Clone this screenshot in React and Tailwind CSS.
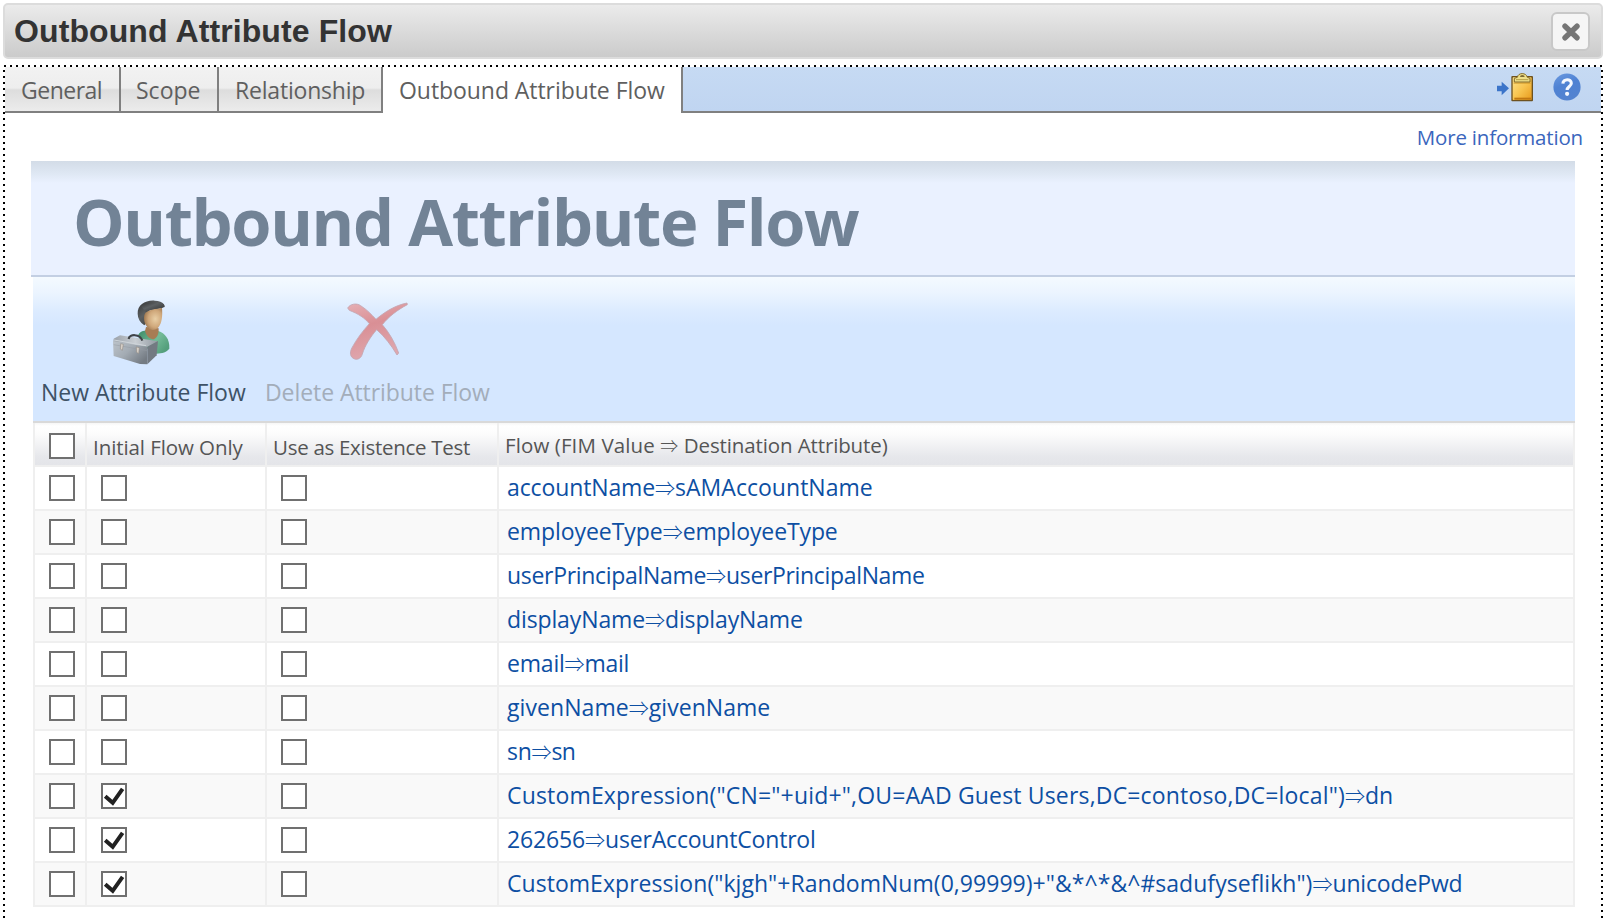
import React from 'react';

const ROWS = [
  { left: 'accountName', right: 'sAMAccountName', l: 'tracking-[-0.12px]', r: 'tracking-[0.03px]' },
  { left: 'employeeType', right: 'employeeType', l: 'tracking-[-0.07px]', r: 'tracking-[-0.12px]' },
  { left: 'userPrincipalName', right: 'userPrincipalName', l: 'tracking-[-0.31px]', r: 'tracking-[-0.34px]' },
  { left: 'displayName', right: 'displayName', l: 'tracking-[-0.12px]', r: 'tracking-[-0.14px]' },
  { left: 'email', right: 'mail', l: 'tracking-[-0.2px]', r: 'tracking-[-0.3px]' },
  { left: 'givenName', right: 'givenName', l: 'tracking-[0.08px]', r: 'tracking-[0.03px]' },
  { left: 'sn', right: 'sn', l: 'tracking-[-0.3px]', r: 'tracking-[-0.6px]' },
  {
    left: 'CustomExpression("CN="+uid+",OU=AAD Guest Users,DC=contoso,DC=local")',
    right: 'dn',
    l: 'tracking-[0.17px]',
    r: 'tracking-[0.1px]',
    initial: true,
  },
  { left: '262656', right: 'userAccountControl', l: 'tracking-[-0.15px]', r: 'tracking-[-0.18px]', initial: true },
  {
    left: 'CustomExpression("kjgh"+RandomNum(0,99999)+"&*^*&^#sadufyseflikh")',
    right: 'unicodePwd',
    l: 'tracking-[0.04px]',
    r: 'tracking-[-0.15px]',
    initial: true,
  },
];

function Checkbox({ checked = false }) {
  return (
    <span className="block size-[26px] shrink-0 border-2 border-[#707070] bg-white">
      {checked && (
        <svg viewBox="0 0 22 22" className="block size-[22px]" fill="none">
          <path d="M2.2 11.3 L9.7 17.8 L19.6 3.8" stroke="#212121" strokeWidth="4" />
        </svg>
      )}
    </span>
  );
}

function CloseIcon() {
  return (
    <svg viewBox="0 0 20 20" className="size-5" fill="none">
      <path d="M4 4.2 L16 15.8 M16 4.2 L4 15.8" stroke="#757575" strokeWidth="5.4" strokeLinecap="round" />
    </svg>
  );
}

function ClipboardIcon() {
  return (
    <svg viewBox="330 215 120 93" className="h-[31px] w-10" fill="none">
      <defs>
        <linearGradient id="clipPaper" x1="0" y1="0" x2="1" y2="1">
          <stop offset="0" stopColor="#fce28c" />
          <stop offset="0.5" stopColor="#f8c550" />
          <stop offset="1" stopColor="#e89a1c" />
        </linearGradient>
      </defs>
      <path d="M336 256 H350 V244 L372 264 L350 285 V273 H336 Z" fill="#3b74c9" />
      <rect x="379" y="227" width="65" height="76" rx="3" fill="#6d5220" />
      <rect x="383" y="231" width="57" height="68" rx="2" fill="url(#clipPaper)" />
      <path d="M386 246 H437 V251 H386 Z" fill="#d19a2b" opacity="0.6" />
      <path d="M388 292 H438 V298 H388 Z" fill="#c17812" />
      <path d="M388 245 V234 L397 231 C399 216 424 216 427 231 L435 234 V245 Z" fill="#efe08a" stroke="#806a2c" strokeWidth="3" />
      <path d="M405 230 a7 6 0 0 1 14 0 Z" fill="#7c6a35" />
      <path d="M393 238 H430" stroke="#b59f48" strokeWidth="3" />
    </svg>
  );
}

function HelpIcon() {
  return (
    <svg viewBox="0 0 28 28" className="size-7" fill="none">
      <defs>
        <linearGradient id="helpDisc" x1="0" y1="0" x2="0.4" y2="1">
          <stop offset="0" stopColor="#6b9ae0" />
          <stop offset="0.5" stopColor="#4f82d3" />
          <stop offset="1" stopColor="#5383d0" />
        </linearGradient>
      </defs>
      <circle cx="14" cy="14" r="13.6" fill="url(#helpDisc)" />
      <path
        d="M9.9 10.6 C10 5.6 18.3 5.3 18.3 10.3 C18.3 13.4 14.1 13.6 14.1 17"
        stroke="#f4f8ff"
        strokeWidth="3.1"
      />
      <circle cx="14.1" cy="20.8" r="2.1" fill="#f4f8ff" />
    </svg>
  );
}

function NewFlowIcon() {
  return (
    <svg viewBox="60 25 192 210" className="h-[70px] w-16" fill="none">
      <defs>
        <radialGradient id="face" cx="0.62" cy="0.5" r="0.7">
          <stop offset="0" stopColor="#e9cfa6" />
          <stop offset="0.55" stopColor="#cfa77a" />
          <stop offset="1" stopColor="#8f6a45" />
        </radialGradient>
        <linearGradient id="shirt" x1="0" y1="0" x2="1" y2="0.6">
          <stop offset="0" stopColor="#3c8a66" />
          <stop offset="0.6" stopColor="#74bb98" />
          <stop offset="1" stopColor="#549f7c" />
        </linearGradient>
        <linearGradient id="hair" x1="0" y1="0" x2="1" y2="1">
          <stop offset="0" stopColor="#333" />
          <stop offset="0.4" stopColor="#5c6062" />
          <stop offset="1" stopColor="#2a2a2a" />
        </linearGradient>
        <linearGradient id="boxFront" x1="0" y1="0" x2="1" y2="0.7">
          <stop offset="0" stopColor="#bcc3ca" />
          <stop offset="0.5" stopColor="#a3abb3" />
          <stop offset="1" stopColor="#747b83" />
        </linearGradient>
        <linearGradient id="boxTop" x1="0" y1="0" x2="1" y2="0">
          <stop offset="0" stopColor="#9aa1a9" />
          <stop offset="0.5" stopColor="#c9ced3" />
          <stop offset="1" stopColor="#929aa2" />
        </linearGradient>
      </defs>
      <path d="M145 135 C152 124 165 122 176 122 L205 124 C225 130 239 148 238 176 C232 188 215 192 200 192 L150 165 Z" fill="url(#shirt)" />
      <path d="M168 112 L206 116 C206 132 203 142 192 149 C181 149 170 142 165 124 Z" fill="#a87c54" />
      <path d="M143 72 C142 46 166 31 194 33 C207 33 217 37 221 43 L224 50 L214 56 L178 62 L170 100 L163 107 C150 98 143 86 143 72 Z" fill="url(#hair)" />
      <path d="M163 76 C168 58 200 58 216 55 C218 78 216 100 206 112 C197 123 180 124 172 112 C165 104 160 92 163 76 Z" fill="url(#face)" />
      <path d="M152 48 C166 36 198 36 222 44 L224 52 C204 58 184 56 168 68 Z" fill="url(#hair)" />
      <path d="M71 147 L90 137 L203 155 L172 172 L70 158 Z" fill="url(#boxTop)" />
      <path d="M69 154 L172 171 V224 L150 223 L71 199 Z" fill="url(#boxFront)" />
      <path d="M172 171 L204 154 L200 197 L172 224 Z" fill="#737a82" />
      <path d="M71 165 L171 183" stroke="#949ba3" strokeWidth="1.5" />
      <path d="M72 151 L168 168" stroke="#ced4d9" strokeWidth="3" />
      <path d="M116 148 C118 132 150 132 157 153" stroke="#3f4347" strokeWidth="6.5" />
      <path d="M92 162 L100 164 L97 182 L91 178 Z" fill="#d6d0c8" stroke="#8c837a" strokeWidth="1.5" />
      <path d="M139 172 L148 174 L146 192 L140 188 Z" fill="#d6d0c8" stroke="#8c837a" strokeWidth="1.5" />
    </svg>
  );
}

function DeleteFlowIcon() {
  return (
    <svg viewBox="45 30 192 186" className="h-[62px] w-16" fill="none">
      <defs>
        <linearGradient id="cross" x1="0" y1="0" x2="0.3" y2="1">
          <stop offset="0" stopColor="#e6b0b5" />
          <stop offset="0.45" stopColor="#d98f95" />
          <stop offset="1" stopColor="#dfa7ae" />
        </linearGradient>
      </defs>
      <path
        d="M53 54 C60 42 80 38 92 47 C112 60 125 74 138 88 C164 66 195 46 231 39 L232 44 C202 60 176 80 157 104 C178 128 195 158 206 189 L201 195 C184 166 164 140 140 119 C122 140 105 166 97 192 C94 204 84 210 74 207 C60 202 58 188 66 173 C80 147 98 123 118 101 C104 84 86 72 58 61 Z"
        fill="url(#cross)"
        stroke="#c3a6b2"
        strokeWidth="2.5"
      />
    </svg>
  );
}

function Arrow({ className }) {
  return (
    <span
      className={`inline-block text-center font-['Noto_Sans_CJK_SC',sans-serif] leading-none font-light tracking-normal ${className}`}
    >
      ⇒
    </span>
  );
}

function Tab({ children, className }) {
  return (
    <div
      className={`flex h-[46px] items-center border-r-2 border-b-2 border-[#808080] bg-[linear-gradient(#f2f2f2_0px,#eeeeee_21px,#dddddd_23px,#ececec_44px)] pt-[3px] text-[23px] text-[#5f5f5f] ${className}`}
    >
      {children}
    </div>
  );
}

export default function App() {
  return (
    <div className="h-[921px] w-[1605px] overflow-hidden bg-white pt-[3px] pl-[3px] font-['Open_Sans',sans-serif] whitespace-nowrap">
      <header className="flex h-14 w-[1600px] items-center justify-between rounded-[5px] border-2 border-[#dcdcdc] bg-linear-to-b from-[#ebebeb] to-[#cbcbcb] pr-[11px] pl-[9px]">
        <h1 className="font-['Liberation_Sans',sans-serif] text-[32px] leading-10 font-bold tracking-[0.1px] text-[#333]">
          Outbound Attribute Flow
        </h1>
        <button className="flex size-[39px] items-center justify-center rounded-md border-2 border-[#c8c8c8] bg-[#f5f5f5] pt-[2px] pl-px">
          <CloseIcon />
        </button>
      </header>

      <div className="mt-[6px] h-[2px] w-[1600px] bg-[repeating-linear-gradient(90deg,transparent_0px,transparent_1px,#000_1px,#000_3px,transparent_3px,transparent_6px)]" />
      <div className="flex h-[856px] w-[1600px]">
        <div className="w-[2px] bg-[repeating-linear-gradient(180deg,transparent_0px,transparent_3px,#000_3px,#000_5px,transparent_5px,transparent_6px)]" />
        <main className="w-[1596px]">
          <nav className="flex h-[46px]">
            <Tab className="w-[116px] pl-4 tracking-[-0.5px]">General</Tab>
            <Tab className="w-[98px] pl-[15px]">Scope</Tab>
            <Tab className="w-[164px] pl-4 tracking-[-0.2px]">Relationship</Tab>
            <div className="flex w-[300px] items-center border-r-2 border-[#808080] pt-[3px] pb-[2px] pl-4 text-[23px] tracking-[-0.06px] text-[#5f5f5f]">
              Outbound Attribute Flow
            </div>
            <div className="flex flex-1 items-center justify-end gap-[18px] border-b-2 border-[#808080] bg-linear-to-b from-[#c6daf3] to-[#c0d5f1] pr-5 pb-[4px]">
              <ClipboardIcon />
              <HelpIcon />
            </div>
          </nav>

          <div className="flex h-12 justify-end pt-[8px] pr-[18px] text-[20.5px] leading-[32px] tracking-[-0.18px] text-[#3b66bd]">
            <a>More information</a>
          </div>

          <section className="ml-[26px] w-[1544px]">
            <div className="h-[116px] border-b-2 border-[#c3cfe3] bg-[linear-gradient(#d3dce7_0px,#dee7f3_12px,#eaf1ff_22px)] pt-5 pl-[42px]">
              <h2 className="text-[65px] leading-[80px] font-bold tracking-[-1.37px] text-[#728396]">Outbound Attribute Flow</h2>
            </div>
            <div className="ml-[2px] w-[1542px]">
              <div className="flex h-36 gap-[19px] bg-[linear-gradient(#f4faff_0px,#ebf4ff_16px,#dcebff_34px,#d5e7ff_48px)] pt-[21px] pl-2">
                <div className="flex w-[205px] flex-col">
                  <div className="ml-[69px] h-[76px]">
                    <NewFlowIcon />
                  </div>
                  <span className="text-[23px] leading-[37px] text-[#3e5266]">New Attribute Flow</span>
                </div>
                <div className="flex w-[226px] flex-col">
                  <div className="ml-20 h-[76px] pt-[2px]">
                    <DeleteFlowIcon />
                  </div>
                  <span className="text-[23px] leading-[37px] tracking-[-0.07px] text-[#a3adba]">Delete Attribute Flow</span>
                </div>
              </div>

              <div className="grid h-[46px] grid-cols-[52px_180px_232px_1078px] border-t-2 border-b-2 border-t-[#d9d9d9] border-b-[#efefef] bg-[linear-gradient(#f6f6f6_0px,#ffffff_3px,#fcfcfc_11px,#e6e7eb_34px,#e4e5e9_42px)] text-[20.5px] text-[#555]">
                <div className="flex items-center border-l-2 border-[#efefef] pt-1 pl-[14px]">
                  <Checkbox />
                </div>
                <div className="flex items-center border-l-2 border-[#efefef] pt-[6px] pl-[6px] tracking-[-0.08px]">Initial Flow Only</div>
                <div className="flex items-center border-l-2 border-[#efefef] pt-[6px] pl-[6px] tracking-[-0.29px]">
                  Use as Existence Test
                </div>
                <div className="flex items-center border-x-2 border-[#efefef] pt-[2px] pl-[6px]">
                  <span>
                    <span className="tracking-[0.1px]">Flow (FIM Value</span>
                    <Arrow className="w-[29px] text-[18px]" />
                    <span className="tracking-[-0.12px]">Destination Attribute)</span>
                  </span>
                </div>
              </div>

              <div>
                {ROWS.map((row) => (
                  <div
                    key={row.left}
                    className="grid h-11 grid-cols-[52px_180px_232px_1078px] border-b-2 border-[#efefef] odd:bg-white even:bg-[#f9f9f9]"
                  >
                    <div className="flex items-center border-l-2 border-[#efefef] pl-[14px]">
                      <Checkbox />
                    </div>
                    <div className="flex items-center border-l-2 border-[#efefef] pl-[14px]">
                      <Checkbox checked={row.initial} />
                    </div>
                    <div className="flex items-center border-l-2 border-[#efefef] pl-[14px]">
                      <Checkbox />
                    </div>
                    <div className="flex items-center border-x-2 border-[#efefef] pb-[2px] pl-2 text-[23px] leading-[32px] text-[#0d4fa3]">
                      <a>
                        <span className={row.l}>{row.left}</span>
                        <Arrow className="w-5 text-[20px]" />
                        <span className={row.r}>{row.right}</span>
                      </a>
                    </div>
                  </div>
                ))}
              </div>
            </div>
          </section>
        </main>
        <div className="w-[2px] bg-[repeating-linear-gradient(180deg,transparent_0px,transparent_3px,#000_3px,#000_5px,transparent_5px,transparent_6px)]" />
      </div>
    </div>
  );
}
